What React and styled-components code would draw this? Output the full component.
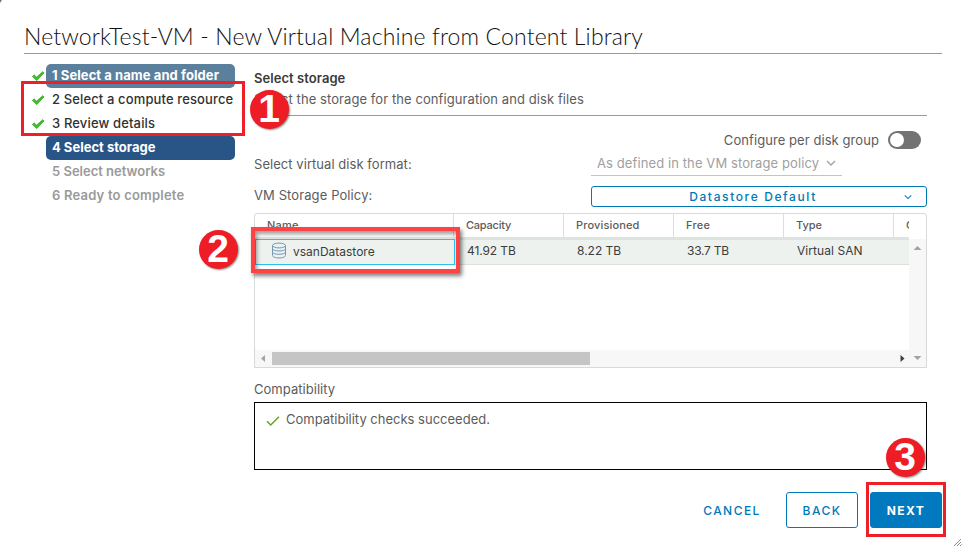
import React from 'react';
import styled, { createGlobalStyle } from 'styled-components';

const Global = createGlobalStyle`
  * { box-sizing: border-box; }
  body { margin: 0; background: #fff; font: 13px/24px Inter, "Open Sans", sans-serif; color: #5c5c5c; overflow: hidden; }
  button { font: inherit; cursor: pointer; }
`;

const Dialog = styled.main`
  position: relative;
  width: 963px;
  height: 546px;
  padding: 0 21px 0 24px;
  background: #fff;
  overflow: hidden;
`;
const Title = styled.h1`
  height: 54px;
  margin: 0;
  padding-top: 20px;
  border-bottom: 1px solid #9a9a9a;
  font: 300 23px/32px Lato, sans-serif;
  letter-spacing: 0.14px;
  color: #111;
  white-space: nowrap;
`;
const Body = styled.div`
  display: grid;
  grid-template-columns: 211px 673px;
  column-gap: 19px;
`;
const Steps = styled.nav`
  display: flex;
  flex-direction: column;
  padding-top: 10px;
`;
const Step = styled.div`
  display: grid;
  grid-template-columns: 22px 189px;
  height: 24px;
  align-items: center;
`;
const tones = {
  visited: 'background:#5a809d;color:#fff;font-weight:700;',
  current: 'background:#285585;color:#fff;font-weight:700;',
  done: 'color:#313131;font-weight:500;',
  todo: 'color:#9a9a9a;',
};
const StepLabel = styled.span`
  height: 24px;
  padding-left: 6px;
  border-radius: 5px;
  line-height: 23px;
  font-weight: 600;
  white-space: nowrap;
  letter-spacing: ${(p) => p.$spacing || 0}px;
  ${(p) => tones[p.$tone]}
`;
const StepCheck = styled.svg`
  width: 13px;
  height: 12px;
  margin: 0 0 0 8px;
`;

const Content = styled.section`
  display: flex;
  flex-direction: column;
  min-width: 0;
`;
const Heading = styled.h2`
  height: 34px;
  margin: 0;
  padding-top: 12px;
  font-size: 13px;
  font-weight: 600;
  line-height: 25px;
  letter-spacing: 0.06px;
  color: #3a3a3a;
`;
const Description = styled.p`
  height: 28px;
  margin: 0;
  border-bottom: 1px solid #9a9a9a;
  line-height: 23px;
  letter-spacing: 0.08px;
`;
const ToggleRow = styled.div`
  display: flex;
  justify-content: flex-end;
  align-items: center;
  gap: 9px;
  height: 18px;
  margin-top: 15px;
  padding-right: 6px;
  line-height: 18px;
  letter-spacing: 0.07px;
`;
const Toggle = styled.span`
  width: 33px;
  height: 18px;
  padding: 2px;
  border-radius: 9px;
  background: #737373;
  &::before {
    content: '';
    display: block;
    width: 14px;
    height: 14px;
    border-radius: 50%;
    background: #fff;
  }
`;
const Field = styled.div`
  display: grid;
  grid-template-columns: 337px 336px;
  align-items: end;
  height: ${(p) => p.$height}px;
`;
const FieldLabel = styled.label`
  line-height: 24px;
  letter-spacing: ${(p) => p.$spacing}px;
`;
const FormatSelect = styled.div`
  display: flex;
  align-items: center;
  gap: 7px;
  width: 251px;
  height: 24px;
  padding: 0 0 1px 6px;
  border-bottom: 1px solid #c4c4c4;
  color: #a0a0a0;
  letter-spacing: 0.1px;
  white-space: nowrap;
`;
const PolicyButton = styled.button`
  display: grid;
  grid-template-columns: 1fr 10px;
  align-items: center;
  height: 21px;
  padding: 0 12px 0 10px;
  border: 1px solid #0079b8;
  border-radius: 3px;
  background: #fff;
  color: #0079b8;
  font-size: 12px;
  font-weight: 500;
  line-height: 18px;
  letter-spacing: 1.62px;
`;

const Grid = styled.div`
  height: 155px;
  margin-top: 6px;
  border: 1px solid #d6dad8;
  border-radius: 3px 3px 0 0;
  display: grid;
  grid-template-rows: 23px 113px 17px;
`;
const HeadRow = styled.div`
  display: grid;
  grid-template-columns: 198px repeat(4, 110px) 16px;
`;
const HeadCell = styled.span`
  padding-left: 12px;
  border-left: ${(p) => (p.$first ? 0 : '1px solid #dcdfdd')};
  font-size: 11px;
  font-weight: 500;
  line-height: 23px;
  letter-spacing: ${(p) => p.$spacing || 0}px;
  overflow: hidden;
  white-space: nowrap;
`;
const GridBody = styled.div`
  display: grid;
  grid-template-columns: 654px 17px;
`;
const Rows = styled.div`
  border-top: 3px solid #dde3df;
`;
const Row = styled.div`
  display: grid;
  grid-template-columns: 200px repeat(4, 110px);
  height: 25px;
  background: #edf2ef;
  border-bottom: 1px solid #dcdfdd;
`;
const Cell = styled.span`
  padding-left: 12px;
  font-size: 12px;
  line-height: 22px;
  color: #3c3c3c;
  white-space: nowrap;
  letter-spacing: ${(p) => p.$spacing || 0}px;
`;
const NameCell = styled.span`
  display: flex;
  align-items: center;
  gap: 6px;
  height: 26px;
  margin-top: -1px;
  padding-left: 15px;
  border: 1px solid #2bc0ee;
  font-size: 12px;
  color: #3c3c3c;
`;
const DiskIcon = styled.svg`
  width: 16px;
  height: 17px;
  margin-top: -4px;
`;
const VBar = styled.div`
  margin-top: 2px;
  padding: 5px 4px;
  background: #f7f7f7;
`;
const HBar = styled.div`
  display: grid;
  grid-template-columns: 17px 318px 1fr 12px 13px;
  align-items: center;
  background: #f7f7f7;
`;
const Thumb = styled.div`
  height: 13px;
  background: #c5c5c5;
`;
const Arrow = styled.svg`
  display: block;
  width: 9px;
  height: 9px;
  margin-left: ${(p) => p.$inset || 0}px;
`;

const CompatLabel = styled.div`
  height: 34px;
  padding-top: 9px;
  line-height: 24px;
  letter-spacing: 0.04px;
`;
const CompatBox = styled.div`
  display: flex;
  gap: 6px;
  height: 68px;
  padding: 4px 11px;
  border: 1px solid #000;
  line-height: 24px;
`;
const SmallCheck = styled.svg`
  width: 14px;
  height: 12px;
  margin-top: 8px;
`;
const Footer = styled.footer`
  display: flex;
  justify-content: flex-end;
  gap: 12px;
  padding-top: 22px;
`;
const looks = {
  link: 'border-color:transparent;color:#0079b8;width:82px;margin-right:1px;',
  outline: 'border-color:#0079b8;color:#0079b8;',
  primary: 'border-color:#0079bf;background:#0079bf;color:#fff;font-weight:700;',
};
const Button = styled.button`
  width: 72px;
  height: 36px;
  padding: 1px 0 0;
  border: 1px solid;
  border-radius: 3px;
  background: none;
  font-size: 12px;
  font-weight: 500;
  line-height: 34px;
  letter-spacing: 1.45px;
  ${(p) => looks[p.$look]}
`;

const Highlight = styled.div`
  position: absolute;
  left: ${(p) => p.$x}px;
  top: ${(p) => p.$y}px;
  width: ${(p) => p.$w}px;
  height: ${(p) => p.$h}px;
  border: ${(p) => (p.$heavy ? '4px solid #fe4344' : '3px solid #ee1f27')};
  ${(p) => p.$heavy && 'box-shadow: 2px 3px 4px rgba(0,0,0,.5), inset 2px 3px 4px rgba(0,0,0,.4);'}
`;
const Badge = styled.div`
  position: absolute;
  left: ${(p) => p.$x}px;
  top: ${(p) => p.$y}px;
  width: 39px;
  height: 39px;
  border-radius: 50%;
  background: #ee1c25;
  box-shadow: 1px 1px 2px rgba(0, 0, 0, 0.45);
  color: #fff;
  font: 700 39px/38px "Liberation Sans", Arial, sans-serif;
  text-align: center;
`;
const Grip = styled.svg`
  position: absolute;
  right: 1px;
  bottom: 0;
  width: 8px;
  height: 7px;
`;
const Corner = styled.svg`
  position: absolute;
  left: 0;
  top: 0;
  width: 3px;
  height: 3px;
`;

const steps = [
  { label: '1 Select a name and folder', tone: 'visited', check: true, spacing: 0.07 },
  { label: '2 Select a compute resource', tone: 'done', check: true, spacing: 0.13 },
  { label: '3 Review details', tone: 'done', check: true, spacing: 0.15 },
  { label: '4 Select storage', tone: 'current' },
  { label: '5 Select networks', tone: 'todo' },
  { label: '6 Ready to complete', tone: 'todo', spacing: 0.2 },
];
const columns = [
  ['Name', 0.22], ['Capacity', -0.22], ['Provisioned', 0.15], ['Free', 0.27], ['Type', 0], ['C', 0],
];
const arrows = {
  up: 'M4.5 2 8.5 6H.5Z',
  down: 'M.5 2H8.5L4.5 6Z',
  left: 'M6 1V8L2 4.5Z',
  right: 'M2.5 1V8L6.5 4.5Z',
};

const ArrowIcon = ({ dir, fill = '#a3a3a3', inset }) => (
  <Arrow viewBox="0 0 9 9" $inset={inset}><path d={arrows[dir]} fill={fill} /></Arrow>
);
const Chevron = ({ size = 10 }) => (
  <svg width={size} height={size} viewBox="0 0 10 10" fill="none" stroke="currentColor" strokeWidth="1.3">
    <path d="M1 3l4 4 4-4" />
  </svg>
);

export default function App() {
  return (
    <Dialog>
      <Global />
      <Title>NetworkTest-VM - New Virtual Machine from Content Library</Title>
      <Body>
        <Steps>
          {steps.map((s) => (
            <Step key={s.label}>
              {s.check ? (
                <StepCheck viewBox="0 0 13 12">
                  <path d="M.4 6.5 2.4 5 4.6 7.2 10.7 1.7 12 2.8 4.9 10.6Z" fill="#3cc422" stroke="#229414" strokeWidth=".7" />
                </StepCheck>
              ) : <span />}
              <StepLabel $tone={s.tone} $spacing={s.spacing}>{s.label}</StepLabel>
            </Step>
          ))}
        </Steps>
        <Content>
          <Heading>Select storage</Heading>
          <Description>Select the storage for the configuration and disk files</Description>
          <ToggleRow>Configure per disk group<Toggle /></ToggleRow>
          <Field $height={27}>
            <FieldLabel $spacing={0.05}>Select virtual disk format:</FieldLabel>
            <FormatSelect>As defined in the VM storage policy<Chevron /></FormatSelect>
          </Field>
          <Field $height={31}>
            <FieldLabel $spacing={0.1}>VM Storage Policy:</FieldLabel>
            <PolicyButton>Datastore Default<Chevron size={8} /></PolicyButton>
          </Field>
          <Grid>
            <HeadRow>
              {columns.map(([name, spacing], i) => (
                <HeadCell key={name} $first={i === 0} $spacing={spacing}>{name}</HeadCell>
              ))}
            </HeadRow>
            <GridBody>
              <Rows>
                <Row>
                  <NameCell>
                    <DiskIcon viewBox="0 0 16 17" fill="#e9f1f5" stroke="#7698b0">
                      <path d="M1.5 3.5V13.5C1.5 16.8 14.5 16.8 14.5 13.5V3.5" />
                      <ellipse cx="8" cy="3.5" rx="6.5" ry="2.4" />
                      <path d="M1.5 7C2 9.6 14 9.6 14.5 7M1.5 10.3C2 12.9 14 12.9 14.5 10.3" fill="none" />
                    </DiskIcon>
                    vsanDatastore
                  </NameCell>
                  <Cell $spacing={-0.09}>41.92 TB</Cell>
                  <Cell>8.22 TB</Cell>
                  <Cell $spacing={-0.27}>33.7 TB</Cell>
                  <Cell $spacing={0.06}>Virtual SAN</Cell>
                </Row>
              </Rows>
              <VBar><ArrowIcon dir="up" /></VBar>
            </GridBody>
            <HBar>
              <ArrowIcon dir="left" inset={4} />
              <Thumb />
              <span />
              <ArrowIcon dir="right" fill="#404040" inset={-3} />
              <ArrowIcon dir="down" />
            </HBar>
          </Grid>
          <CompatLabel>Compatibility</CompatLabel>
          <CompatBox>
            <SmallCheck viewBox="0 0 14 12" fill="none" stroke="#62a420" strokeWidth="1.5">
              <path d="M1 6.3 4.7 10 13 1.8" />
            </SmallCheck>
            Compatibility checks succeeded.
          </CompatBox>
        </Content>
      </Body>
      <Footer>
        <Button $look="link">CANCEL</Button>
        <Button $look="outline">BACK</Button>
        <Button $look="primary">NEXT</Button>
      </Footer>
      <Highlight $x={21} $y={81} $w={224} $h={55} />
      <Highlight $heavy $x={251} $y={227} $w={209} $h={46} />
      <Highlight $x={866} $y={482} $w={80} $h={55} />
      <Badge $x={249.5} $y={89.5}>1</Badge>
      <Badge $x={198.5} $y={229.5}>2</Badge>
      <Badge $x={885.5} $y={437.5}>3</Badge>
      <Corner viewBox="0 0 3 3"><path d="M0 0H2L0 3Z" fill="#777" /></Corner>
      <Grip viewBox="0 0 8 7" stroke="#555" strokeDasharray="1 .5"><path d="M0 7 7 0M3 7 7 3M6 7 7.5 5.5" /></Grip>
    </Dialog>
  );
}
